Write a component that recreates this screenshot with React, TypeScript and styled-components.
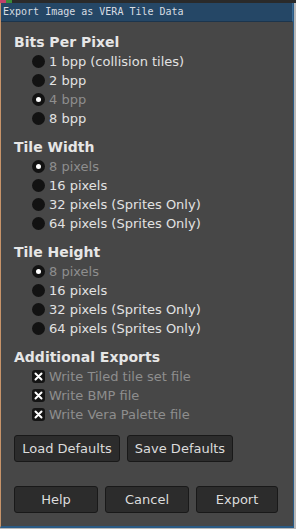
import styled, { createGlobalStyle } from "styled-components";

const Global = createGlobalStyle`
    html, body {
        margin: 0;
        padding: 0;
        background: #9a9a9a;
        width: 296px;
        height: 529px;
        overflow: hidden;
    }
`;

const Screen = styled.div`
    width: 296px;
    height: 529px;
    display: flex;
    flex-direction: column;
    background: #b8b8b8;
`;

const TopStrip = styled.div`
    height: 3px;
    background: #2a2a2a;
    display: flex;
`;

const StripMark = styled.div<{ $color: string; $w: number }>`
    width: ${(p) => p.$w}px;
    background: ${(p) => p.$color};
`;

const Window = styled.div`
    width: 292px;
    height: 523px;
    display: flex;
    flex-direction: column;
    border-left: 1px solid #c7946a;
    border-right: 1px solid #2b5b85;
    border-bottom: 2px solid #2b5b85;
    background: #474747;
`;

const TitleBar = styled.div`
    height: 18px;
    background: #254766;
    border-bottom: 1px solid #1c354d;
    border-right: 1px solid #3b6a92;
    color: #d8dde2;
    font-family: "DejaVu Sans Mono", monospace;
    font-size: 10px;
    line-height: 18px;
    padding-left: 2px;
`;

const Body = styled.div`
    flex: 1;
    display: flex;
    flex-direction: column;
    padding: 11px 0 0 13px;
    font-family: "DejaVu Sans", sans-serif;
`;

const Section = styled.div`
    & + & {
        margin-top: 10px;
    }
`;

const SectionTitle = styled.div`
    font-weight: bold;
    font-size: 14px;
    color: #e6e6e6;
    height: 19px;
    line-height: 19px;
`;

const Option = styled.div<{ $dim?: boolean }>`
    display: flex;
    align-items: center;
    gap: 4px;
    height: 19px;
    padding-left: 18px;
    font-size: 13px;
    color: ${(p) => (p.$dim ? "#8e8e8e" : "#e2e2e2")};
`;

const Radio = styled.span<{ $on?: boolean }>`
    width: 13px;
    height: 13px;
    border-radius: 50%;
    background: #121212;
    display: flex;
    align-items: center;
    justify-content: center;
    &::after {
        content: "";
        display: ${(p) => (p.$on ? "block" : "none")};
        width: 5px;
        height: 5px;
        border-radius: 50%;
        background: #ffffff;
    }
`;

const Check = styled.span`
    width: 13px;
    height: 13px;
    border-radius: 3px;
    background: #141414;
    display: flex;
    align-items: center;
    justify-content: center;
`;

const ButtonRow = styled.div<{ $top: number }>`
    display: flex;
    gap: 7px;
    margin-top: ${(p) => p.$top}px;
`;

const Button = styled.button<{ $w: number }>`
    width: ${(p) => p.$w}px;
    height: 27px;
    padding: 0;
    background: #2c2c2c;
    border: 1px solid #191919;
    border-radius: 3px;
    color: #dcdcdc;
    font-family: "DejaVu Sans", sans-serif;
    font-size: 13px;
`;

const Cross = () => (
    <svg width="9" height="9" viewBox="0 0 9 9">
        <path d="M1.5 1.5 L7.5 7.5 M7.5 1.5 L1.5 7.5" stroke="#fff" strokeWidth="2" strokeLinecap="round" />
    </svg>
);

const sections = [
    {
        title: "Bits Per Pixel",
        options: ["1 bpp (collision tiles)", "2 bpp", "4 bpp", "8 bpp"],
        selected: 2,
    },
    {
        title: "Tile Width",
        options: ["8 pixels", "16 pixels", "32 pixels (Sprites Only)", "64 pixels (Sprites Only)"],
        selected: 0,
    },
    {
        title: "Tile Height",
        options: ["8 pixels", "16 pixels", "32 pixels (Sprites Only)", "64 pixels (Sprites Only)"],
        selected: 0,
    },
];

const exportsList = ["Write Tiled tile set file", "Write BMP file", "Write Vera Palette file"];

export default function App() {
    return (
        <Screen>
            <Global />
            <TopStrip>
                <StripMark $color="#c0406a" $w={6} />
                <StripMark $color="#3a8a3a" $w={6} />
            </TopStrip>
            <Window>
                <TitleBar>Export Image as VERA Tile Data</TitleBar>
                <Body>
                    {sections.map((s) => (
                        <Section key={s.title}>
                            <SectionTitle>{s.title}</SectionTitle>
                            {s.options.map((o, i) => (
                                <Option key={o} $dim={i === s.selected}>
                                    <Radio $on={i === s.selected} />
                                    {o}
                                </Option>
                            ))}
                        </Section>
                    ))}
                    <Section>
                        <SectionTitle>Additional Exports</SectionTitle>
                        {exportsList.map((o) => (
                            <Option key={o} $dim>
                                <Check>
                                    <Cross />
                                </Check>
                                {o}
                            </Option>
                        ))}
                    </Section>
                    <ButtonRow $top={11}>
                        <Button $w={106}>Load Defaults</Button>
                        <Button $w={106}>Save Defaults</Button>
                    </ButtonRow>
                    <ButtonRow $top={24}>
                        <Button $w={84}>Help</Button>
                        <Button $w={84}>Cancel</Button>
                        <Button $w={82}>Export</Button>
                    </ButtonRow>
                </Body>
            </Window>
        </Screen>
    );
}
